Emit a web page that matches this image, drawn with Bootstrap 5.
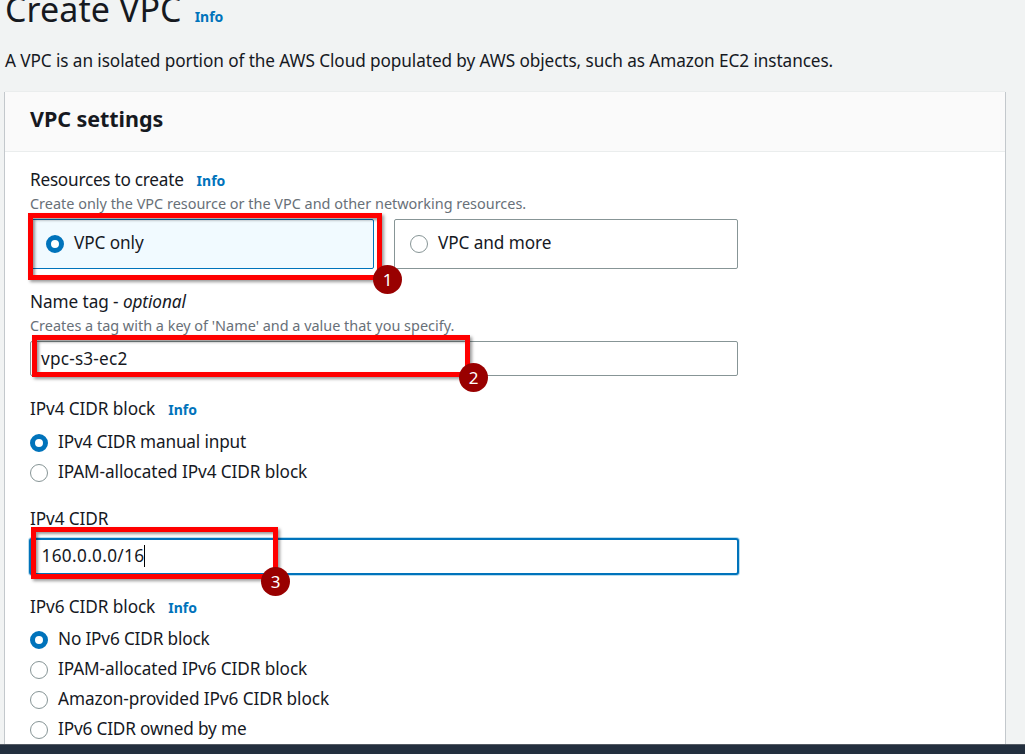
<!DOCTYPE html>
<html lang="en">
<head>
<meta charset="utf-8">
<meta name="viewport" content="width=device-width, initial-scale=1">
<title>Create VPC</title>
<link href="https://cdn.jsdelivr.net/npm/bootstrap@5.3.0/dist/css/bootstrap.min.css" rel="stylesheet">
<style>
body{font-family:"Noto Sans",sans-serif;font-size:17.2px;line-height:26px;letter-spacing:-.085px;color:#16191f;background:#f1f3f3;height:754px;overflow:hidden}
.page-top{height:92px;padding-left:5px}
.page-title{font-size:34px;line-height:44px;letter-spacing:.08px;margin:-13px 13px 0 0;font-weight:400;color:#16191f}
.page-desc{margin-top:17px;white-space:nowrap}
.info-link{font-size:14px;font-weight:700;letter-spacing:0;color:#0073bb;text-decoration:none}
.settings{margin-left:5px;width:1000px;height:653px;background:#fff;box-shadow:-1px 0 0 #c3c8cc,1px 0 0 #c3c8cc,0 -1px 0 #eaeded}
.settings-head{height:60px;background:#fafafa;border-bottom:1px solid #eaeded;padding:13px 25px 0}
.settings-head h2{font-size:21.5px;line-height:28px;font-weight:700;letter-spacing:-.05px;margin:0}
.settings-body{padding:15px 25px 0}
.field{width:708px}
.field + .field{margin-top:20px}
.field-label{height:26px;gap:13px}
.tight{letter-spacing:-.25px}
.snug{letter-spacing:-.16px}
.help{font-size:14.45px;line-height:20px;height:20px;letter-spacing:0;color:#687078;margin-top:1px}
.control{margin-top:5px}
.tile{height:50px;width:344px;border:1px solid #879596;border-radius:2px;padding:10px 15px 0 15px}
.tile.on{border-color:#0073bb;background:#f1faff}
.tile .knob{margin-top:1px}
.choices{gap:4px;margin-top:7px}
.choices.near{margin-top:6px}
.choice{height:26px;gap:10px;white-space:nowrap}
.knob{width:18px;height:18px;flex:none;border:1.3px solid #879596;border-radius:50%;background:#fff;margin-top:2px}
.knob.on{border:5px solid #0073bb}
.entry{height:35px;border:1px solid #879596;border-radius:2px;background:#fff;padding:4px 10px;letter-spacing:.2px}
.entry.active{height:37px;margin:0 -1px;padding:2px 10px 4px 10.5px;border:2px solid #0073bb;border-radius:3px;box-shadow:0 0 0 1px #b8dcee;letter-spacing:.34px}
.caret{width:1px;height:22px;background:#000}
.marker{border:5px solid #f00;box-shadow:2px 2px 3px #0006,inset 2px 2px 3px #0006;z-index:2}
.marker b{width:29px;height:29px;border-radius:50%;background:#900;color:#fff;font:400 17px/29px "Noto Sans",sans-serif;text-align:center}
.m1{left:-2px;top:-6px;width:354px;height:67px}
.m1 b{right:-25px;bottom:-19px}
.m2{left:2px;top:-6px;width:438px;height:42px}
.m2 b{right:-23px;bottom:-20px}
.m3{left:1px;top:-11px;width:247px;height:52px}
.m3 b{right:-17px;bottom:-22px}
.footer-bar{height:10px;background:#232f3e;border-top:1px solid #545b64;margin-top:-1px}
</style>
</head>
<body>
<header class="page-top">
  <div class="d-flex align-items-baseline"><h1 class="page-title">Create VPC</h1><a class="info-link">Info</a></div>
  <p class="page-desc mb-0">A VPC is an isolated portion of the AWS Cloud populated by AWS objects, such as Amazon EC2 instances.</p>
</header>
<main class="settings">
  <div class="settings-head"><h2>VPC settings</h2></div>
  <div class="settings-body">
    <section class="field">
      <div class="field-label d-flex align-items-baseline"><span class="tight">Resources to create</span><a class="info-link">Info</a></div>
      <div class="help">Create only the VPC resource or the VPC and other networking resources.</div>
      <div class="control position-relative d-flex justify-content-between">
        <div class="tile on"><div class="choice d-flex align-items-center"><i class="knob on"></i><span>VPC only</span></div></div>
        <div class="tile"><div class="choice d-flex align-items-center"><i class="knob"></i><span>VPC and more</span></div></div>
        <div class="marker m1 position-absolute"><b class="position-absolute">1</b></div>
      </div>
    </section>
    <section class="field">
      <div class="field-label">Name tag - <em>optional</em></div>
      <div class="help">Creates a tag with a key of 'Name' and a value that you specify.</div>
      <div class="control position-relative">
        <div class="entry">vpc-s3-ec2</div>
        <div class="marker m2 position-absolute"><b class="position-absolute">2</b></div>
      </div>
    </section>
    <section class="field">
      <div class="field-label d-flex align-items-baseline"><span>IPv4 CIDR block</span><a class="info-link">Info</a></div>
      <div class="choices d-grid">
        <div class="choice d-flex align-items-center"><i class="knob on"></i><span class="snug">IPv4 CIDR manual input</span></div>
        <div class="choice d-flex align-items-center"><i class="knob"></i><span>IPAM-allocated IPv4 CIDR block</span></div>
      </div>
    </section>
    <section class="field">
      <div class="field-label" style="padding-top:1px">IPv4 CIDR</div>
      <div class="position-relative" style="margin-top:7px">
        <div class="entry active d-flex align-items-center"><span>160.0.0.0/16</span><i class="caret"></i></div>
        <div class="marker m3 position-absolute"><b class="position-absolute">3</b></div>
      </div>
    </section>
    <section class="field mt-0" style="padding-top:19px">
      <div class="field-label d-flex align-items-baseline"><span>IPv6 CIDR block</span><a class="info-link">Info</a></div>
      <div class="choices near d-grid">
        <div class="choice d-flex align-items-center"><i class="knob on"></i><span class="snug">No IPv6 CIDR block</span></div>
        <div class="choice d-flex align-items-center"><i class="knob"></i><span>IPAM-allocated IPv6 CIDR block</span></div>
        <div class="choice d-flex align-items-center"><i class="knob"></i><span>Amazon-provided IPv6 CIDR block</span></div>
        <div class="choice d-flex align-items-center"><i class="knob"></i><span class="snug">IPv6 CIDR owned by me</span></div>
      </div>
    </section>
  </div>
</main>
<footer class="footer-bar"></footer>
<script src="https://cdn.jsdelivr.net/npm/bootstrap@5.3.0/dist/js/bootstrap.bundle.min.js"></script>
</body>
</html>
